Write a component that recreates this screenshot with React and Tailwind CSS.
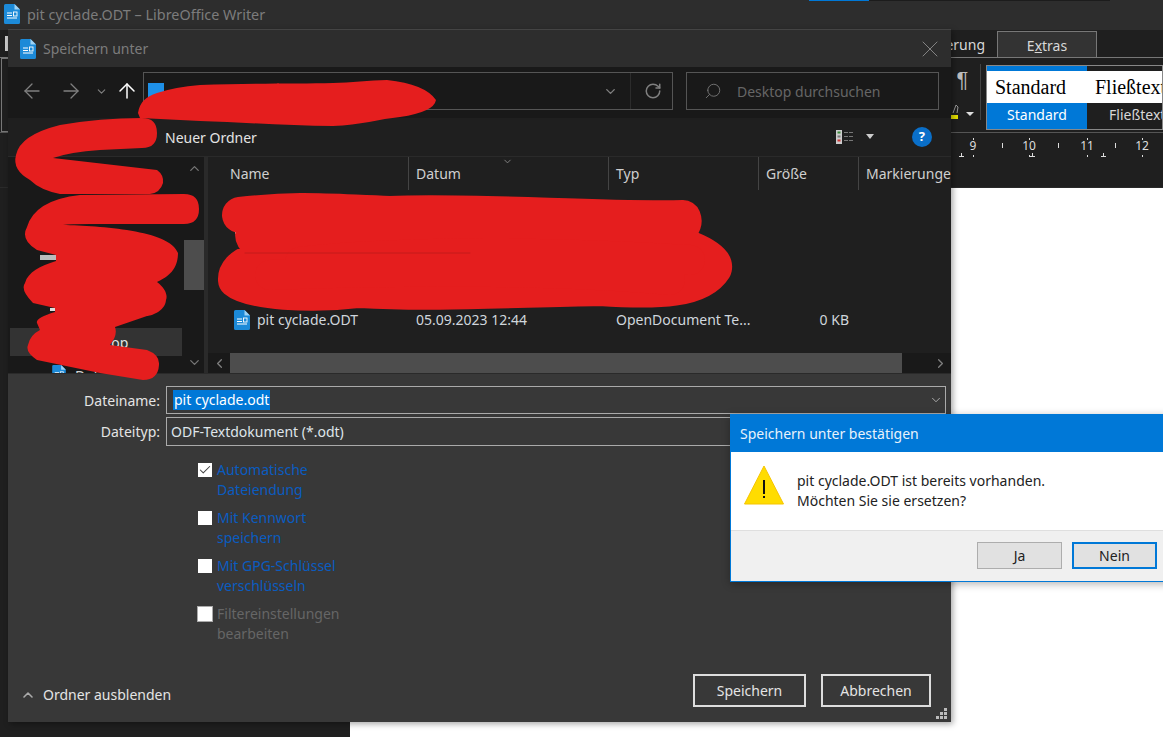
import React from "react";
import { ArrowLeft, ArrowRight, ArrowUp, ChevronDown, ChevronUp, ChevronLeft, ChevronRight, RotateCw, Search, X, Check } from "lucide-react";

function DocIcon({ className }) {
  return (
    <svg viewBox="0 0 16 20" className={className}>
      <path d="M1.5 0H10.5L16 5.5V18.5A1.5 1.5 0 0 1 14.5 20H1.5A1.5 1.5 0 0 1 0 18.5V1.5A1.5 1.5 0 0 1 1.5 0Z" fill="#1c8ad8" />
      <path d="M10.5 0L16 5.5H10.5Z" fill="#9ed2f4" />
      <path d="M3 9H8M3 11.5H8M3 14H13" stroke="#fff" strokeWidth="1" />
      <rect x="9.5" y="8" width="3.5" height="4" fill="none" stroke="#fff" strokeWidth="0.9" />
    </svg>
  );
}

function FileColumn({ width, label }) {
  return (
    <div style={{ width }} className="h-full shrink-0 pl-[7px] border-l border-[#444] flex items-center whitespace-nowrap">
      {label}
    </div>
  );
}

function Option({ lines, checked, disabled }) {
  return (
    <div className="flex gap-[5px] h-[48px]">
      <div className={"w-[14px] h-[14px] mt-[2px] bg-white flex items-center justify-center shrink-0 " + (disabled ? "outline outline-[#aaa]" : "")}>
        {checked && <Check size={14} strokeWidth={1.8} className="text-[#444]" />}
      </div>
      <div className={"leading-[20px] -mt-[1px] " + (disabled ? "text-[#666]" : "text-[#0a5cc0]")}>
        {lines.map((l) => <div key={l}>{l}</div>)}
      </div>
    </div>
  );
}

function Scribbles() {
  return (
    <svg className="absolute left-0 top-0 pointer-events-none" width="1163" height="737" fill="none">
      <g fill="#e51e1e">
        <path d="M138 113Q140 98 157 93Q175 87 200 85C250 83 300 84 333 83C350 83 370 80 387 80Q425 84 436 100Q434 112 400 117C380 119 360 125 333 126C290 126 240 122 200 121L140 118Z" />
        <path d="M142 118Q157 118 157 133Q157 148 142 148L100 150Q70 152 53 158L157 170Q164 175 163 183Q160 193 150 194L60 194Q40 190 30 180Q12 170 16 155Q20 135 60 125Q100 118 142 118Z" />
        <path d="M184 194Q199 194 199 209Q199 224 184 224L90 224Q70 224 63 225C100 226 170 230 178 253C178 272 165 278 157 282C165 288 168 295 166 300C165 312 150 316 147 316L115 327Q118 335 110 345L147 350Q160 355 159 365Q158 380 143 380L100 373L37 360Q25 352 28 345Q30 335 40 330L37 323Q35 318 55 312L55 308L33 303Q20 290 25 283C28 272 40 266 56 261L56 255L37 250Q20 240 27 227Q35 200 80 195Z" />
      </g>
      <g stroke="#e51e1e" strokeLinecap="round" strokeLinejoin="round">
        <path strokeWidth="36" d="M240 215C300 208 330 212 390 214C470 210 600 220 683 218C690 235 640 235 620 236C680 238 716 258 714 268C700 290 660 292 600 288C500 290 430 294 360 290C310 296 250 292 236 280C235 265 260 255 300 252C260 245 250 240 254 232C280 228 500 240 640 240" />
        <path strokeWidth="30" d="M300 262C400 250 560 252 690 260M270 275C400 270 560 270 670 280" />
        <path strokeWidth="1" stroke="#c41b1b" d="M245 253H470" />
      </g>
    </svg>
  );
}

export default function App() {
  return (
    <div className="relative w-[1163px] h-[737px] overflow-hidden bg-[#1f1f1f] text-[14px] flex flex-col" style={{ fontFamily: '"Noto Sans", sans-serif' }}>
      {/* writer title bar */}
      <div className="relative h-[30px] shrink-0 bg-[#2d2d2d] flex items-center pl-[4px] gap-[7px] text-[#7c7c7c] text-[14.4px]">
        <DocIcon className="w-[16px] h-[20px] -mt-[2px]" />
        <span>pit cyclade.ODT – LibreOffice Writer</span>
        <div className="absolute left-[809px] top-0 w-[60px] h-[1px] bg-[#0078d7]" />
        <div className="absolute left-[869px] top-0 w-[241px] h-[1px] bg-[#1c1c1c]" />
      </div>

      {/* menu tabs */}
      <div className="h-[28px] shrink-0 flex items-end border-b border-[#777] text-[#d8d8d8]">
        <div className="w-[3px] h-[15px] ml-[5px] mb-[6px] bg-[#ccc]" />
        <div className="h-[26px] w-[55px] ml-auto pr-[12px] overflow-hidden flex items-center justify-end pt-[1px]">erung</div>
        <div className="h-[26px] w-[100px] mr-[66px] bg-[#333] border border-b-0 border-[#777] flex items-center justify-center pt-[1px]">
          <span>E<u>x</u>tras</span>
        </div>
      </div>

      {/* toolbar */}
      <div className="h-[75px] shrink-0 flex border-b border-[#555] text-[#d8d8d8]">
        <div className="w-[7px] ml-[1px] h-full border-l border-t border-b border-[#777]" />
        <div className="w-[35px] ml-auto flex flex-col items-center pt-[7px] text-[22px] leading-[30px] text-[#bbb]" style={{ fontFamily: '"Liberation Sans", sans-serif' }}>
          <span>¶</span>
          <svg width="26" height="18" viewBox="0 0 26 18" className="mt-[9px]">
            <path d="M3 9L6 1L8 3L7 9" fill="none" stroke="#999" />
            <rect x="0" y="11" width="8" height="4" fill="#e6e000" />
            <path d="M16 8H24L20 12Z" fill="#ddd" />
          </svg>
        </div>
        <div className="w-[1px] h-[56px] mt-[6px] bg-[#444]" />
        <div className="w-[177px] ml-[5px] mt-[7px] h-[65px] border border-[#888] overflow-hidden whitespace-nowrap">
          <div className="flex h-[5px]">
            <div className="w-[100px] bg-[#0078d7]" />
            <div className="flex-1 bg-[#1f1f1f]" />
          </div>
          <div className="flex h-[32px] bg-white text-black text-[20px] leading-[32px]" style={{ fontFamily: '"Liberation Serif", serif' }}>
            <div className="w-[100px] shrink-0 pl-[8px]">Standard</div>
            <div className="pl-[8px]">Fließtext</div>
          </div>
          <div className="flex h-[26px] leading-[24px]">
            <div className="w-[100px] shrink-0 bg-[#0078d7] text-white text-center">Standard</div>
            <div className="pl-[22px]">Fließtext</div>
          </div>
        </div>
      </div>

      {/* ruler */}
      <div className="h-[55px] shrink-0 border-b border-[#2a2a2a] relative text-[12px] text-[#ddd]">
        {[["9", 973], ["10", 1029], ["11", 1087], ["12", 1142]].map(([n, x]) => (
          <React.Fragment key={n}>
            <span style={{ left: x - 12 }} className="absolute top-[4px] w-[24px] text-center">{n}</span>
            <span style={{ left: x }} className="absolute top-[5px] w-[1px] h-[2px] bg-[#ddd]" />
            <span style={{ left: x }} className="absolute top-[22px] w-[1px] h-[2px] bg-[#ddd]" />
          </React.Fragment>
        ))}
        {[1002, 1058, 1115].map((x) => (
          <span key={x} style={{ left: x }} className="absolute top-[10px] w-[1px] h-[5px] bg-[#ddd]" />
        ))}
        {[959, 1030, 1101].map((x) => (
          <span key={x} style={{ left: x }} className="absolute top-[20px] w-[5px] h-[4px] flex flex-col items-center justify-end">
            <span className="w-[1px] h-[3px] bg-[#ddd]" />
            <span className="w-[5px] h-[1px] bg-[#ddd]" />
          </span>
        ))}
      </div>

      {/* document page */}
      <div className="flex-1 ml-[350px] bg-white" />

      {/* save dialog */}
      <div className="absolute left-[8px] top-[29px] w-[943px] h-[693px] flex flex-col border-t border-[#444] shadow-[2px_2px_6px_rgba(0,0,0,0.35)] text-[#d5d5d5]">
        <div className="h-[37px] shrink-0 bg-[#2d2d2d] flex items-center pl-[12px] gap-[7px] text-[#7c7c7c]">
          <DocIcon className="w-[16px] h-[20px]" />
          <span>Speichern unter</span>
          <X size={28} strokeWidth={0.8} className="ml-auto mr-[7px] text-[#8a8a8a]" />
        </div>

        {/* navigation */}
        <div className="h-[51px] shrink-0 bg-[#191919] flex items-start pt-[5px]">
          <div className="w-[135px] h-[38px] flex items-center text-[#808080]">
            <ArrowLeft size={24} strokeWidth={1.3} className="ml-[12px]" />
            <ArrowRight size={24} strokeWidth={1.3} className="ml-[15px]" />
            <ChevronDown size={13} strokeWidth={2} className="ml-[12px]" />
            <ArrowUp size={24} strokeWidth={1.5} className="ml-[7px] text-white" />
          </div>
          <div className="w-[530px] h-[38px] border border-[#555] flex items-center">
            <div className="w-[16px] h-[16px] ml-[4px] bg-[#1e90e8]" />
            <ChevronDown size={15} strokeWidth={2.2} className="ml-auto mr-[12px] text-[#808080]" />
            <div className="w-[1px] h-full bg-[#2c2c2c]" />
            <RotateCw size={18} className="ml-[13px] mr-[10px] text-[#808080]" />
          </div>
          <div className="w-[253px] h-[38px] ml-[13px] border border-[#555] flex items-center pl-[17px] gap-[15px] text-[#666]">
            <Search size={18} strokeWidth={1.2} className="-scale-x-100 text-[#777]" />
            <span>Desktop durchsuchen</span>
          </div>
        </div>

        {/* command bar */}
        <div className="h-[38px] shrink-0 bg-[#1f1f1f] flex items-center relative">
          <span className="ml-[157px] text-[#e4e4e4]">Neuer Ordner</span>
          <svg width="20" height="16" viewBox="0 0 20 16" className="ml-[579px]">
            <rect x="0" y="1" width="6" height="14" fill="#ccc" />
            <rect x="1.5" y="2.5" width="3" height="2" fill="#3a8a3a" />
            <rect x="1.5" y="6.5" width="3" height="2" fill="#777" />
            <rect x="1.5" y="10.5" width="3" height="2" fill="#c33" />
            <path d="M8 3.5H18M8 7.5H18M8 11.5H18" stroke="#777" strokeDasharray="4 1" />
          </svg>
          <svg width="10" height="6" viewBox="0 0 10 6" className="ml-[9px]"><path d="M1 0H9L5 5Z" fill="#ccc" /></svg>
          <div className="w-[20px] h-[20px] ml-[37px] rounded-full bg-[#0a6fc9] text-white text-[13px] font-bold flex items-center justify-center">?</div>
        </div>

        {/* panes */}
        <div className="h-[217px] shrink-0 flex bg-[#1f1f1f] border-t border-[#2a2a2a]">
          <div className="w-[196px] shrink-0 bg-[#191919] flex">
            <div className="w-[176px] h-full overflow-hidden pt-[98px] pl-[2px] pr-[2px]">
              <div className="w-[16px] h-[5px] ml-[30px] bg-[#bbb]" />
              <div className="w-[5px] h-[3px] ml-[40px] mt-[48px] bg-[#ddd]" />
              <div className="h-[28px] mt-[17px] bg-[#333] flex items-center pl-[64px] text-[#e4e4e4]">Desktop</div>
              <div className="flex items-start gap-[9px] ml-[42px] mt-[9px]">
                <DocIcon className="w-[14px] h-[17px]" />
                <span>Dokumente</span>
              </div>
            </div>
            <div className="w-[20px] flex flex-col items-center text-[#777] pt-[4px]">
              <ChevronUp size={15} />
              <div className="w-full h-[50px] mt-[64px] bg-[#4d4d4d]" />
              <ChevronDown size={15} className="mt-[65px]" />
            </div>
          </div>
          <div className="w-[4px] shrink-0 bg-[#2a2a2a]" />
          <div className="flex-1 min-w-0 flex flex-col overflow-hidden">
            <div className="h-[33px] shrink-0 flex relative text-[#cfcfcf]">
              <div className="w-[200px] shrink-0 pl-[22px] flex items-center">Name</div>
              <FileColumn width={200} label="Datum" />
              <FileColumn width={150} label="Typ" />
              <FileColumn width={100} label="Größe" />
              <FileColumn width={120} label="Markierungen" />
              <ChevronDown size={11} className="absolute left-[294px] -top-[1px] text-[#888]" />
            </div>
            <div className="flex-1 flex flex-col pt-[38px] text-[#cfd6dc]">
              <div className="w-[5px] h-[6px] ml-[27px] bg-[#ddd]" />
              <div className="w-[13px] h-[16px] ml-[27px] mt-[22px] bg-[#e8c25a]" />
              <div className="flex items-center mt-[37px]">
                <div className="w-[208px] shrink-0 pl-[26px] flex items-center gap-[7px]">
                  <DocIcon className="w-[16px] h-[20px]" />
                  <span>pit cyclade.ODT</span>
                </div>
                <span className="w-[200px] shrink-0">05.09.2023 12:44</span>
                <span className="w-[150px] shrink-0 whitespace-nowrap">OpenDocument Te...</span>
                <span className="w-[83px] shrink-0 text-right">0 KB</span>
              </div>
            </div>
            <div className="h-[20px] shrink-0 bg-[#191919] flex items-center text-[#808080]">
              <div className="w-[22px] flex justify-center"><ChevronLeft size={15} /></div>
              <div className="w-[672px] h-full bg-[#4d4d4d]" />
              <div className="flex-1 flex justify-end pr-[3px]"><ChevronRight size={15} /></div>
            </div>
          </div>
        </div>

        {/* form */}
        <div className="flex-1 bg-[#383838] border-t border-[#2a2a2a] flex flex-col relative">
          <div className="flex items-center mt-[12px] h-[28px]">
            <span className="w-[152px] text-right text-[#e4e4e4]">Dateiname:</span>
            <div className="w-[780px] h-[28px] ml-[6px] border border-[#aaa] flex items-center pl-[6px]">
              <span className="bg-[#0078d7] text-white leading-[20px] px-[1px]">pit cyclade.odt</span>
              <ChevronDown size={14} strokeWidth={1.3} className="ml-auto mr-[2px] text-[#ccc]" />
            </div>
          </div>
          <div className="flex items-center mt-[3px] h-[29px]">
            <span className="w-[152px] text-right text-[#e4e4e4]">Dateityp:</span>
            <div className="w-[780px] h-[29px] ml-[6px] border border-[#aaa] flex items-center pl-[4px] text-[#dfe5ea]">ODF-Textdokument (*.odt)</div>
          </div>
          <div className="ml-[190px] mt-[15px]">
            <Option checked lines={["Automatische", "Dateiendung"]} />
            <Option lines={["Mit Kennwort", "speichern"]} />
            <Option lines={["Mit GPG-Schlüssel", "verschlüsseln"]} />
            <Option disabled lines={["Filtereinstellungen", "bearbeiten"]} />
          </div>
          <div className="mt-auto mb-[15px] flex items-end pl-[12px]">
            <div className="flex items-center gap-[7px] h-[33px] pt-[8px] text-[#e4e4e4]">
              <ChevronUp size={16} strokeWidth={2.4} className="text-[#aaa]" />
              <span>Ordner ausblenden</span>
            </div>
            <div className="ml-auto flex gap-[15px] mr-[20px]">
              <div className="w-[113px] h-[33px] border-2 border-[#ddd] flex items-center justify-center text-[#e4e4e4]">Speichern</div>
              <div className="w-[110px] h-[33px] border-2 border-[#ddd] flex items-center justify-center text-[#e4e4e4]">Abbrechen</div>
            </div>
          </div>
          <svg width="12" height="12" viewBox="0 0 12 12" className="absolute right-[3px] bottom-[2px]" fill="#bbb">
            <rect x="8" y="0" width="3" height="3" /><rect x="4" y="4" width="3" height="3" /><rect x="8" y="4" width="3" height="3" />
            <rect x="0" y="8" width="3" height="3" /><rect x="4" y="8" width="3" height="3" /><rect x="8" y="8" width="3" height="3" />
          </svg>
        </div>
      </div>

      <Scribbles />

      {/* confirm dialog */}
      <div className="absolute left-[730px] top-[414px] w-[450px] h-[168px] border border-[#0078d7] flex flex-col shadow-[0_2px_8px_rgba(0,0,0,0.3)]">
        <div className="h-[37px] shrink-0 bg-[#0078d7] text-[#e8f2fb] flex items-center pl-[9px]">Speichern unter bestätigen</div>
        <div className="h-[78px] shrink-0 bg-white flex items-start pl-[13px] gap-[13px] text-[#222] leading-[20px]">
          <svg width="40" height="40" viewBox="0 0 40 40" className="mt-[13px]">
            <path d="M20 1L39.5 39H0.5Z" fill="#ffdc00" stroke="#f5c400" strokeLinejoin="round" />
            <rect x="19" y="15" width="2" height="14" fill="#111" />
            <rect x="19" y="31" width="2" height="2" fill="#111" />
          </svg>
          <div className="mt-[19px]">
            <div>pit cyclade.ODT ist bereits vorhanden.</div>
            <div>Möchten Sie sie ersetzen?</div>
          </div>
        </div>
        <div className="flex-1 bg-[#f0f0f0] border-t border-[#dfdfdf] flex items-center pl-[246px] pb-[2px] gap-[10px] text-[#222]">
          <div className="w-[85px] h-[27px] bg-[#e1e1e1] border border-[#adadad] flex items-center justify-center">Ja</div>
          <div className="w-[85px] h-[27px] bg-[#e1e1e1] border-2 border-[#0078d7] flex items-center justify-center">Nein</div>
        </div>
      </div>
    </div>
  );
}
